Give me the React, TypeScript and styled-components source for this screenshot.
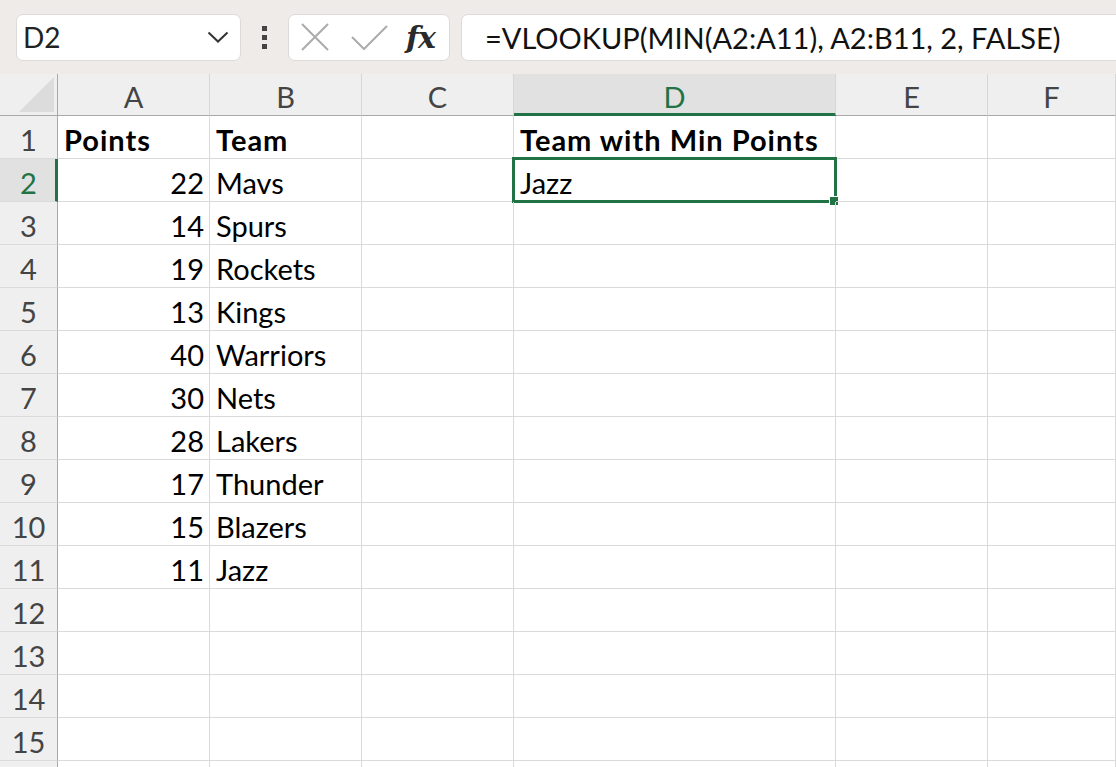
import React from "react";
import styled, { createGlobalStyle, css } from "styled-components";

const GlobalStyle = createGlobalStyle`
  html, body { margin: 0; padding: 0; background: #ffffff; overflow: hidden; }
  body { font-family: Lato, "Open Sans", sans-serif; }
`;

const FONT = `Lato, "Open Sans", sans-serif`;

const Page = styled.div`
  width: 1116px;
  height: 767px;
  overflow: hidden;
  background: #fff;
`;

const Toolbar = styled.div`
  height: 74px;
  background: #efebe9;
  display: flex;
  align-items: center;
  padding-left: 16px;
  box-sizing: border-box;
`;

const Field = styled.div<{ $w?: number; $grow?: boolean }>`
  height: 47px;
  box-sizing: border-box;
  background: #fff;
  border: 1px solid #dedad8;
  border-radius: 7px;
  display: flex;
  align-items: center;
  ${(p) => (p.$w ? `width: ${p.$w}px; flex: none;` : "")}
  ${(p) => (p.$grow ? `flex: 1; margin-right: -12px;` : "")}
`;

const NameText = styled.span`
  font-family: ${FONT};
  font-size: 28px;
  color: #222;
  padding-left: 6px;
  flex: 1;
`;

const Chevron = styled.svg`
  width: 22px;
  height: 12px;
  margin-right: 11px;
`;

const Dots = styled.div`
  width: 47px;
  display: flex;
  flex-direction: column;
  align-items: center;
  gap: 4px;
  & > i {
    display: block;
    width: 5px;
    height: 5px;
    background: #444;
  }
`;

const IconSvg = styled.svg`
  flex: none;
`;

const Fx = styled.span`
  font-family: "DejaVu Serif", "Liberation Serif", serif;
  font-style: italic;
  font-weight: bold;
  font-size: 30px;
  color: #2a2a2a;
  margin-left: 18px;
  letter-spacing: -1px;
`;

const Formula = styled.span`
  font-family: ${FONT};
  font-size: 29px;
  color: #111;
  padding-left: 23px;
  white-space: nowrap;
`;

const Gap = styled.div<{ $w: number }>`
  width: ${(p) => p.$w}px;
  flex: none;
`;

const Sheet = styled.div`
  display: grid;
  grid-template-columns: 58px 152px 152px 152px 322px 152px 1fr;
  grid-template-rows: 42px;
  grid-auto-rows: 43px;
  font-family: ${FONT};
  font-size: 29px;
`;

const Corner = styled.div`
  background: #efefef;
  border-right: 1px solid #a9a9a9;
  border-bottom: 1px solid #a9a9a9;
  box-sizing: border-box;
  position: relative;
  &::after {
    content: "";
    position: absolute;
    right: 3px;
    bottom: 3px;
    width: 35px;
    height: 35px;
    background: #dcdcdc;
    clip-path: polygon(100% 0, 100% 100%, 0 100%);
  }
`;

const ColHeader = styled.div<{ $active?: boolean }>`
  background: ${(p) => (p.$active ? "#e1e1e1" : "#efefef")};
  color: ${(p) => (p.$active ? "#217346" : "#444")};
  border-right: 1px solid #d6d6d6;
  border-bottom: ${(p) => (p.$active ? "3px solid #217346" : "1px solid #a9a9a9")};
  box-sizing: border-box;
  display: flex;
  align-items: flex-end;
  justify-content: center;
  padding-bottom: ${(p) => (p.$active ? "2px" : "4px")};
  line-height: 1;
`;

const RowHeader = styled.div<{ $active?: boolean }>`
  background: ${(p) => (p.$active ? "#e1e1e1" : "#efefef")};
  color: ${(p) => (p.$active ? "#217346" : "#444")};
  border-right: ${(p) => (p.$active ? "3px solid #217346" : "1px solid #a9a9a9")};
  border-bottom: 1px solid #dadada;
  box-sizing: border-box;
  display: flex;
  align-items: flex-end;
  justify-content: center;
  padding-bottom: 4px;
  padding-left: ${(p) => (p.$active ? "2px" : "0")};
  line-height: 1;
`;

const Cell = styled.div<{ $right?: boolean; $bold?: boolean; $selected?: boolean }>`
  position: relative;
  border-right: 1px solid #dadada;
  border-bottom: 1px solid #dadada;
  box-sizing: border-box;
  display: flex;
  align-items: flex-end;
  justify-content: ${(p) => (p.$right ? "flex-end" : "flex-start")};
  padding: 0 5px 4px 6px;
  line-height: 1;
  color: #000;
  font-weight: ${(p) => (p.$bold ? 700 : 400)};
  letter-spacing: ${(p) => (p.$bold ? "1px" : "0")};
  white-space: nowrap;
  ${(p) =>
    p.$selected &&
    css`
      &::before {
        content: "";
        position: absolute;
        left: -2px;
        top: -2px;
        right: -2px;
        bottom: -2px;
        border: 3px solid #217346;
        pointer-events: none;
      }
      &::after {
        content: "";
        position: absolute;
        right: -4px;
        bottom: -5px;
        width: 8px;
        height: 8px;
        background: #217346;
        border: 1px solid #fff;
      }
    `}
`;

type Row = { a?: string; b?: string; d?: string; bold?: boolean };

const rows: Row[] = [
  { a: "Points", b: "Team", d: "Team with Min Points", bold: true },
  { a: "22", b: "Mavs", d: "Jazz" },
  { a: "14", b: "Spurs" },
  { a: "19", b: "Rockets" },
  { a: "13", b: "Kings" },
  { a: "40", b: "Warriors" },
  { a: "30", b: "Nets" },
  { a: "28", b: "Lakers" },
  { a: "17", b: "Thunder" },
  { a: "15", b: "Blazers" },
  { a: "11", b: "Jazz" },
  {},
  {},
  {},
  {},
  {},
];

const cols = ["A", "B", "C", "D", "E", "F"];

export default function App() {
  return (
    <Page>
      <GlobalStyle />
      <Toolbar>
        <Field $w={225}>
          <NameText>D2</NameText>
          <Chevron viewBox="0 0 22 12">
            <path d="M1.5 1.5 L11 10.5 L20.5 1.5" fill="none" stroke="#333" strokeWidth="2" />
          </Chevron>
        </Field>
        <Dots>
          <i />
          <i />
          <i />
        </Dots>
        <Field $w={162}>
          <Gap $w={12} />
          <IconSvg width="28" height="28" viewBox="0 0 28 28">
            <path d="M1 1 L27 27 M27 1 L1 27" stroke="#ababab" strokeWidth="2" fill="none" />
          </IconSvg>
          <Gap $w={22} />
          <IconSvg width="37" height="25" viewBox="0 0 37 25">
            <path d="M1 12 L13 24 L36 1" stroke="#ababab" strokeWidth="2" fill="none" />
          </IconSvg>
          <Fx>fx</Fx>
        </Field>
        <Gap $w={11} />
        <Field $grow>
          <Formula>=VLOOKUP(MIN(A2:A11), A2:B11, 2, FALSE)</Formula>
        </Field>
      </Toolbar>
      <Sheet>
        <Corner />
        {cols.map((c) => (
          <ColHeader key={c} $active={c === "D"}>
            {c}
          </ColHeader>
        ))}
        {rows.map((r, i) => (
          <React.Fragment key={i}>
            <RowHeader $active={i === 1}>{i < 15 ? i + 1 : ""}</RowHeader>
            <Cell $right={!r.bold} $bold={r.bold}>
              {r.a}
            </Cell>
            <Cell $bold={r.bold}>{r.b}</Cell>
            <Cell />
            <Cell $bold={r.bold} $selected={i === 1}>
              {r.d}
            </Cell>
            <Cell />
            <Cell />
          </React.Fragment>
        ))}
      </Sheet>
    </Page>
  );
}
